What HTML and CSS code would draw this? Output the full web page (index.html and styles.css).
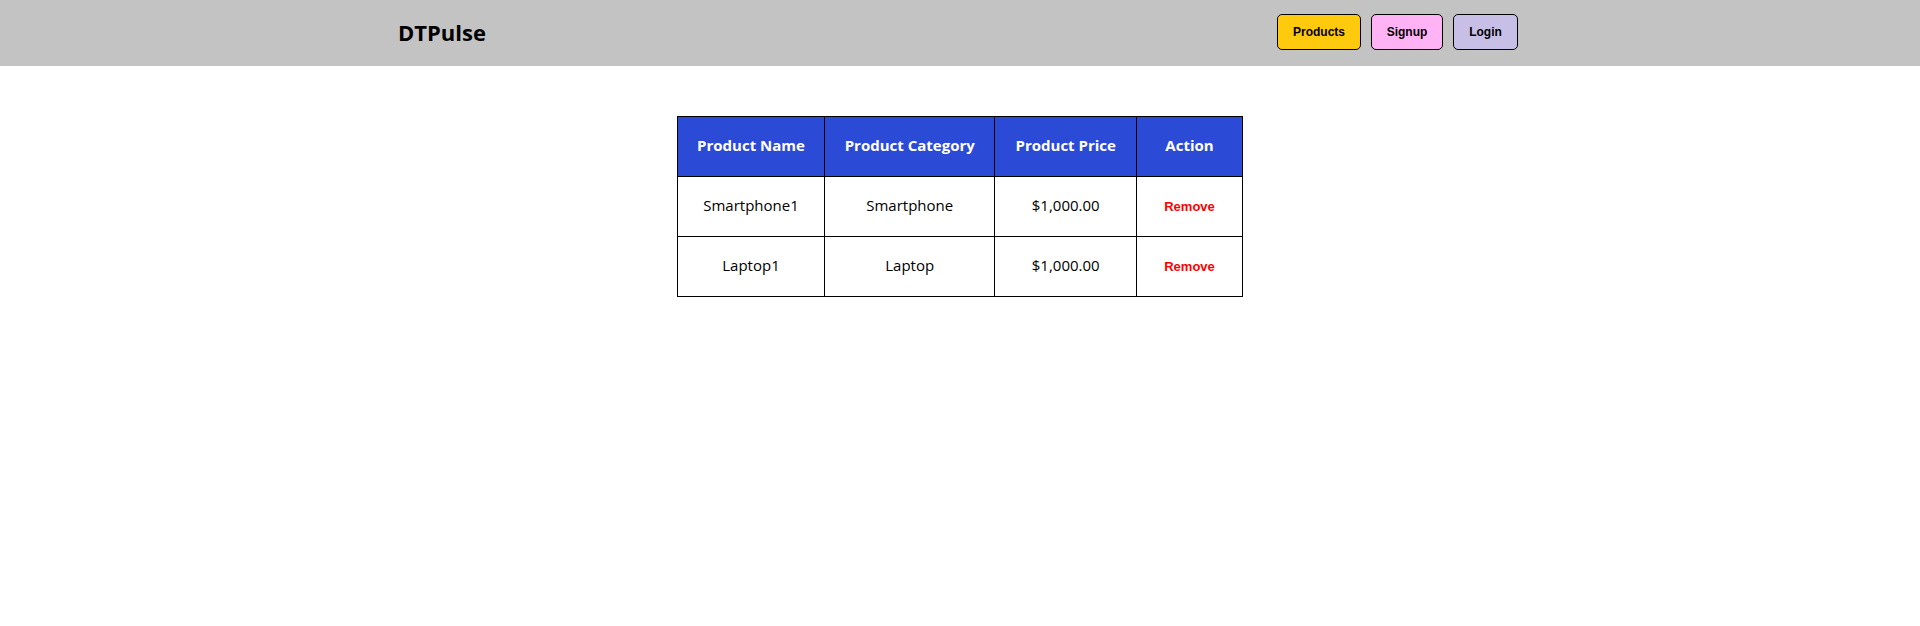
FILE: index.html
```html
<!DOCTYPE html>
<html>
<head>
  <title>DTPulse</title>
  <link rel="stylesheet" href="styles.css">
</head>
<body>
<div id="topPane">
  <div class="inner">
    <div class="logo">DTPulse</div>
    <div class="nav">
      <button class="btn products">Products</button>
      <button class="btn signup">Signup</button>
      <button class="btn login">Login</button>
    </div>
  </div>
</div>
<table class="products-table">
  <tr>
    <th class="c1">Product Name</th>
    <th class="c2">Product Category</th>
    <th class="c3">Product Price</th>
    <th class="c4">Action</th>
  </tr>
  <tr>
    <td>Smartphone1</td>
    <td>Smartphone</td>
    <td>$1,000.00</td>
    <td><a href="#" class="remove">Remove</a></td>
  </tr>
  <tr>
    <td>Laptop1</td>
    <td>Laptop</td>
    <td>$1,000.00</td>
    <td><a href="#" class="remove">Remove</a></td>
  </tr>
</table>
</body>
</html>
```
FILE: styles.css
```css
body {
  margin: 0;
  padding: 0;
  background: #fff;
  font-family: "Open Sans", "DejaVu Sans", sans-serif;
}

#topPane {
  background-color: #c3c3c3;
  height: 66px;
}

#topPane .inner {
  width: 1124px;
  margin: 0 auto;
  height: 100%;
  display: flex;
  align-items: center;
  justify-content: space-between;
}

.logo {
  font-size: 22px;
  font-weight: bold;
  color: #000;
  margin-bottom: 2px;
}

.nav {
  display: flex;
  gap: 10px;
  padding-right: 4px;
  margin-bottom: 2px;
}

.btn {
  height: 36px;
  border: 1px solid #000;
  border-radius: 5px;
  font-family: "Liberation Sans", Arial, sans-serif;
  font-weight: bold;
  font-size: 12px;
  color: #000;
  cursor: pointer;
  padding: 0;
}

.btn.products {
  width: 84px;
  background-color: #ffc90e;
}

.btn.signup {
  width: 72px;
  background-color: #ffb3f5;
}

.btn.login {
  width: 65px;
  background-color: #c8bfe7;
}

.products-table {
  border-collapse: collapse;
  margin: 50px auto 0;
  width: 566px;
}

.products-table th,
.products-table td {
  border: 1px solid #000;
  height: 56px;
  padding: 0 0 3px;
  text-align: center;
  font-size: 15px;
}

.products-table th {
  background-color: #2b4ad6;
  color: #fff;
  font-weight: bold;
}

.c1 { width: 147px; }
.c2 { width: 171px; }
.c3 { width: 142px; }
.c4 { width: 106px; }

a.remove {
  color: #ff0000;
  text-decoration: none;
  font-family: "Liberation Sans", Arial, sans-serif;
  font-weight: bold;
  font-size: 13px;
}
```
